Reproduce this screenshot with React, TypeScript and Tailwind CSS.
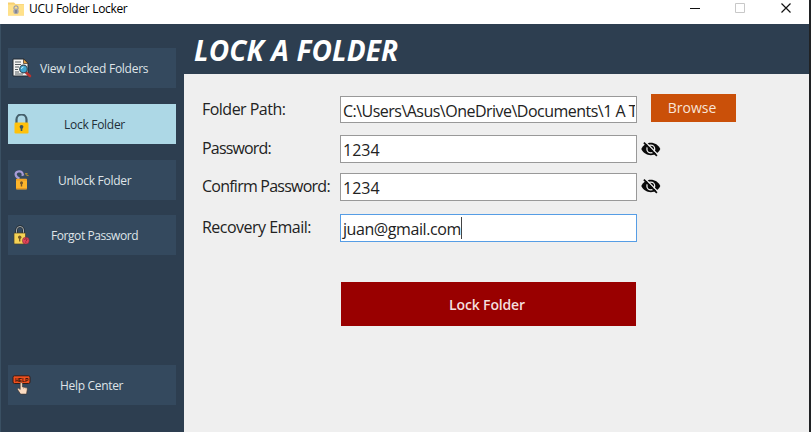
import React from "react";

function DocumentSearchIcon() {
  return (
    <svg width="20" height="20" viewBox="0 0 20 20">
      <path d="M1 1h11l4 4v13H1z" fill="#f4f4f2" stroke="#222b33" />
      <path d="M11.5 1l4.500 4.500h-4.500z" fill="#e8a33d" stroke="#3b3026" strokeWidth=".7" />
      <path d="M3 4h6M3 6.500h6M3 9h4M3 11.500h3M3 14h4M3 16h8" stroke="#555c60" strokeWidth="1" />
      <path d="M14 14.500l4 3.500" stroke="#b9322f" strokeWidth="2.600" strokeLinecap="round" />
      <circle cx="11.500" cy="11" r="3.800" fill="#3fa5cf" stroke="#344c5a" strokeWidth="1.200" />
      <path d="M9.500 11a2 2 0 0 1 2-2" stroke="#c9f2ff" fill="none" />
    </svg>
  );
}

function LockIcon() {
  return (
    <svg width="20" height="20" viewBox="0 0 20 20">
      <path d="M4.500 9V5.500a5 5 0 0 1 10 0V9" fill="none" stroke="#455f6b" strokeWidth="2.200" />
      <rect x="2.500" y="8.500" width="14" height="11" rx="1.300" fill="#ffc10b" />
      <circle cx="9.500" cy="12.800" r="1.900" fill="#3b5360" />
      <path d="M8.700 13h1.600v4H8.700z" fill="#3b5360" />
    </svg>
  );
}

function UnlockIcon() {
  return (
    <svg width="20" height="20" viewBox="0 0 20 20">
      <path d="M7.500 8.500C3 7 2.300 2.500 6.200 1.500c2.600-.6 4.300.8 4.700 3.300" fill="none" stroke="#a79bd6" strokeWidth="2.200" />
      <path d="M9.600 5.600l2.400-1" stroke="#a79bd6" strokeWidth="1.500" />
      <path d="M13 3.800l2.500-.3M14 4.800l2.500 1" stroke="#b39135" strokeWidth="1.200" />
      <rect x="4" y="8.700" width="11" height="10.800" rx=".8" fill="#fdb52b" />
      <path d="M4 10h11M4 18.500h11" stroke="#e79725" />
      <circle cx="9.500" cy="12.800" r="1.500" fill="#74552b" />
      <path d="M8.800 13h1.400v3.500H8.800z" fill="#74552b" />
    </svg>
  );
}

function ForgotIcon() {
  return (
    <svg width="20" height="20" viewBox="0 0 20 20">
      <path d="M4.500 8V5a3.500 3.500 0 0 1 7 0v3" fill="none" stroke="#242c31" strokeWidth="2.400" />
      <path d="M4.500 8V5a3.500 3.500 0 0 1 7 0v3" fill="none" stroke="#a8adb0" strokeWidth="1" />
      <rect x="2" y="8" width="11.500" height="11" rx=".8" fill="#f5d255" stroke="#4b432a" strokeWidth=".7" />
      <circle cx="7.700" cy="12.300" r="1.700" fill="#7a5b20" />
      <path d="M7 12.500h1.400v4H7z" fill="#7a5b20" />
      <circle cx="13.800" cy="15.700" r="3.400" fill="#e0465a" stroke="#7d2d3b" strokeWidth=".6" />
      <path d="M12.500 14.700c.2-1.300 2.600-1.200 2.500.1 0 .8-1.200.8-1.200 1.700m0 .6v.7" fill="none" stroke="#7d1f30" strokeWidth=".9" />
    </svg>
  );
}

function HelpIcon() {
  return (
    <span className="relative block h-5 w-5">
      <svg width="20" height="20" viewBox="0 0 20 20">
        <rect x="1" y=".8" width="17" height="7.700" rx="1.500" fill="#f0501e" stroke="#331d19" />
        <path d="M8.200 14.500V8.700c0-1.600 2.200-1.600 2.200 0v3.200l3.500.7c1.200.3 1.500 1 1.300 2.100l-.7 4.400H8.600L5.700 14.800c-.6-1.400.8-2 1.500-1.200z" fill="#fbdcc2" stroke="#45342c" strokeWidth=".6" />
        <path d="M11.500 12.500v1.500M13.300 12.800v1.400" stroke="#b79279" strokeWidth=".5" />
      </svg>
      <span className="absolute left-[3px] top-[1px] font-['Liberation_Sans',sans-serif] text-[5px] font-bold leading-[8px] text-[#2b100a]">HELP</span>
    </span>
  );
}

function NavButton({ icon, label, className, textClass }: { icon: React.ReactNode; label: string; className: string; textClass: string }) {
  return (
    <button className={`flex h-10 w-[168px] shrink-0 items-center pl-1 text-[12px] ${className}`}>
      {icon}
      <span className={`whitespace-nowrap pt-[2px] ${textClass}`}>{label}</span>
    </button>
  );
}

function EyeOff() {
  return (
    <svg width="20" height="16" viewBox="0 0 20 16" className="ml-1 shrink-0">
      <path d="M.3 8C2.300 4 5.800 1.800 9.800 1.800S17.300 4 19.300 8c-2 4-5.500 6.200-9.500 6.200S2.300 12 .3 8z" fill="#0a0a0a" />
      <circle cx="9.800" cy="8" r="3.900" fill="none" stroke="#efefef" strokeWidth="1.300" />
      <path d="M4.300.8l13 13.200" stroke="#efefef" strokeWidth="1.300" />
      <path d="M2.900 1.700l13 13.100" stroke="#0a0a0a" strokeWidth="1.700" />
    </svg>
  );
}

function Field({ label, labelClass, children, className, boxClass = "h-[28px] border-[#999]", after }: { label: string; labelClass: string; children: React.ReactNode; className: string; boxClass?: string; after?: React.ReactNode }) {
  return (
    <div className={`flex h-[28px] items-start ${className}`}>
      <label className={`mt-[2px] w-[138px] shrink-0 whitespace-nowrap text-[16px] leading-[22px] ${labelClass}`}>{label}</label>
      <div className={`flex w-[297px] shrink-0 items-start whitespace-nowrap border bg-white pl-[2px] pt-[3px] ${boxClass}`}>
        {children}
      </div>
      {after}
    </div>
  );
}

export default function App() {
  return (
    <div className="flex h-[432px] w-[811px] overflow-hidden bg-[#202224] font-['Open_Sans','Noto_Sans',sans-serif] text-[#222]">
      <div className="flex w-[809px] shrink-0 flex-col">
        <div className="flex h-6 shrink-0 items-center bg-white">
          <svg width="16" height="16" viewBox="0 0 16 16" className="-mt-[7px] ml-2">
            <path d="M0 1.500h6L7.500 3H16v11.500H0z" fill="#f7d070" />
            <path d="M0 3.500h16v11H0z" fill="#ffe18a" />
            <path d="M6 8V6.800a2 2 0 0 1 4 0V8" stroke="#9a9caa" fill="none" strokeWidth="1.200" />
            <rect x="5.300" y="7.500" width="5.400" height="5.500" rx="2.300" fill="#a4a5af" />
            <path d="M8 9v3" stroke="#666875" />
          </svg>
          <span className="-mt-[7px] ml-[5px] whitespace-nowrap text-[12px] leading-4 tracking-[-0.320px] text-black">UCU Folder Locker</span>
          <svg width="119" height="24" viewBox="0 0 119 24" className="ml-auto" fill="none">
            <path d="M0 8.500h10" stroke="#111" />
            <path d="M45.500 3.500h9v9h-9z" stroke="#c8c8c8" />
            <path d="M91.500 3.500l9 9m0-9l-9 9" stroke="#111" strokeWidth="1.200" />
          </svg>
        </div>
        <div className="flex min-h-0 flex-1">
          <nav className="flex w-[184px] shrink-0 flex-col border-l border-[#3a5063] bg-[#2d3e50] pl-[7px] pt-6">
            <NavButton icon={<DocumentSearchIcon />} label="View Locked Folders" className="bg-[#34495e] text-[#dfe4e8]" textClass="ml-2 tracking-[-0.260px]" />
            <NavButton icon={<LockIcon />} label="Lock Folder" className="mt-4 bg-[#add8e6] text-[#222f38]" textClass="ml-8 tracking-[-0.280px]" />
            <NavButton icon={<UnlockIcon />} label="Unlock Folder" className="mt-4 bg-[#34495e] text-[#dfe4e8]" textClass="ml-[26px] tracking-[-0.280px]" />
            <NavButton icon={<ForgotIcon />} label="Forgot Password" className="mt-[15px] bg-[#34495e] text-[#dfe4e8]" textClass="ml-[19px] tracking-[-0.430px]" />
            <NavButton icon={<HelpIcon />} label="Help Center" className="mt-[110px] bg-[#34495e] text-[#dfe4e8]" textClass="ml-[28px] tracking-[-0.320px]" />
          </nav>
          <main className="flex min-w-0 flex-1 flex-col bg-[#efefef]">
            <header className="h-[50px] shrink-0 bg-[#2d3e50] pl-[10px] pt-[8px]">
              <h1 className="whitespace-nowrap text-[28px] font-bold italic leading-[36px] tracking-[0.150px] text-white">LOCK A FOLDER</h1>
            </header>
            <div className="flex flex-col pl-[18px]">
              <Field label="Folder Path:" labelClass="tracking-[-0.520px]" className="mt-[22px]" boxClass="h-[27px] border-[#999]"
                after={<button className="-mt-[2px] ml-[14px] h-[28px] w-[85px] bg-[#ca5009] pr-[3px] text-[14px] leading-[28px] text-[#f8e4d8]">Browse</button>}>
                <span className="w-[292px] overflow-hidden text-[16px] leading-[22px] tracking-[-0.520px]">C:\Users\Asus\OneDrive\Documents\1 A T</span>
              </Field>
              <Field label="Password:" labelClass="tracking-[-0.820px]" className="mt-[11px]" after={<div className="mt-[6px]"><EyeOff /></div>}>
                <span className="text-[16px] leading-[22px]">1234</span>
              </Field>
              <Field label="Confirm Password:" labelClass="tracking-[-0.760px]" className="mt-[10px]" after={<div className="mt-[5px]"><EyeOff /></div>}>
                <span className="text-[16px] leading-[22px]">1234</span>
              </Field>
              <Field label="Recovery Email:" labelClass="tracking-[-0.520px]" className="mt-[13px]" boxClass="h-[28px] border-[#569de5]">
                <span className="text-[16px] leading-[22px] tracking-[-0.420px]">juan@gmail.com</span>
                <span className="-mt-px h-[22px] w-px bg-[#444]" />
              </Field>
              <button className="ml-[139px] mt-[40px] h-[44px] w-[295px] bg-[#990000] pr-[3px] text-[14px] font-semibold tracking-[-0.150px] text-[#f4dede]">Lock Folder</button>
            </div>
          </main>
        </div>
      </div>
    </div>
  );
}
